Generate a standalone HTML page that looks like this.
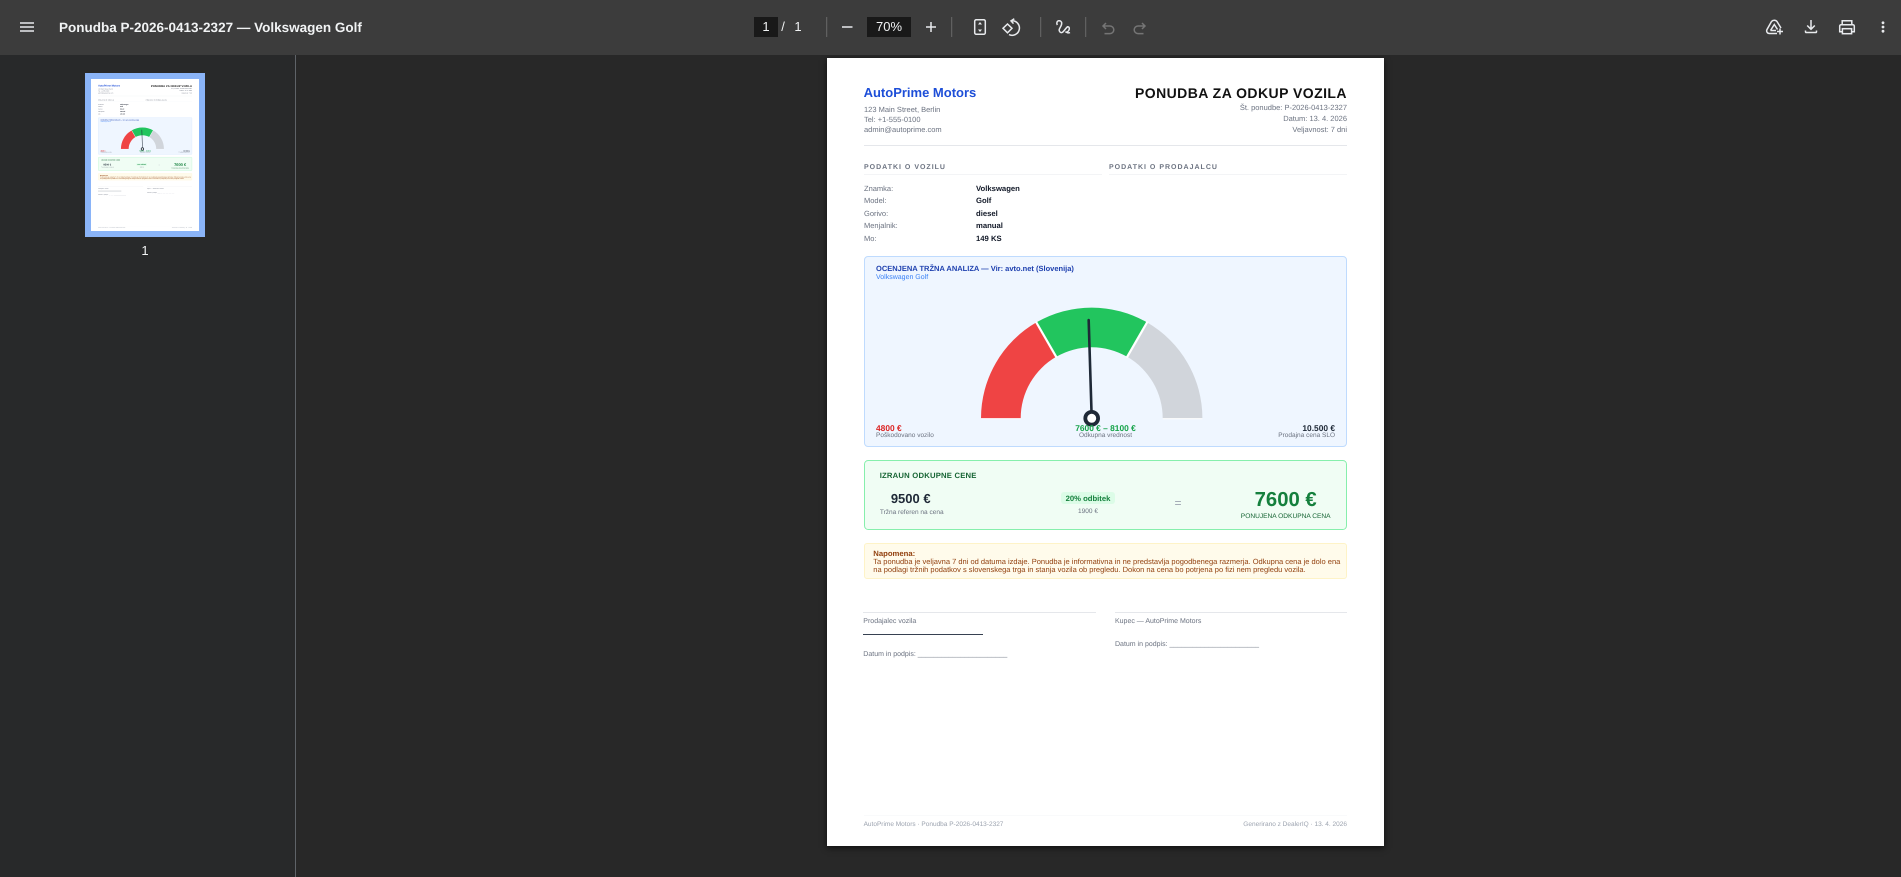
<!DOCTYPE html>
<html lang="sl">
<head>
<meta charset="utf-8">
<title>Ponudba P-2026-0413-2327 — Volkswagen Golf</title>
<style>
html,body{margin:0;padding:0;width:1901px;height:877px;overflow:hidden;background:#282828;font-family:"Liberation Sans",sans-serif}
#bar{position:absolute;left:0;top:0;width:1901px;height:55px;background:#3c3c3c;z-index:5}
#bar svg{position:absolute;left:0;top:0}
#side{position:absolute;left:0;top:55px;width:295px;height:822px;background:#28292a;border-right:1px solid #5f6368;box-sizing:content-box}
#name{position:absolute;left:59px;top:18px;line-height:20px;font-size:13.5px;font-weight:700;color:#f1f3f4;white-space:nowrap;text-rendering:geometricPrecision}
.bx{position:absolute;top:17px;height:20px;background:#191919}
.tb{position:absolute;top:17px;line-height:20px;font-size:13px;color:#f1f3f4;text-align:center;white-space:nowrap}
#thumbb{position:absolute;left:85px;top:73px;width:120px;height:164px;background:#8ab4f8}
#thumbw{position:absolute;left:91px;top:79px;width:108.2px;height:152px;background:#fff;overflow:hidden;filter:blur(.35px)}
#thumbw .page{position:absolute;left:0;top:0;transform:scale(.1943);transform-origin:0 0;box-shadow:none;filter:none}
#tn{position:absolute;left:135px;top:241px;width:20px;text-align:center;color:#f1f3f4;font-size:13px;line-height:20px}
.page{position:absolute;left:827px;top:58px;width:557px;height:787.5px;background:#fff;box-shadow:0 2px 6px rgba(0,0,0,.6);overflow:hidden;text-rendering:geometricPrecision;filter:blur(.25px)}
.page div{position:absolute}
.t{line-height:10px;height:10px;margin-top:.6px;white-space:nowrap;font-size:7.5px;color:#6b7280}
.c{width:200px;text-align:center}
.b{font-weight:700}
.v{left:149px;font-weight:700;color:#111827;font-size:7.7px}
.h{font-weight:700;font-size:7px;letter-spacing:1px}
.l{left:37px}
.s{font-size:6.5px}
.m{font-size:7.7px}
</style>
</head>
<body>
<div id="side"></div>
<div id="thumbb"></div>
<div id="thumbw">
<div class="page">
<div class="t b" style="left:36.6px;top:29.7px;font-size:13px;color:#1d4ed8">AutoPrime Motors</div>
<div class="t l" style="top:46.3px">123 Main Street, Berlin</div>
<div class="t l" style="top:56.3px">Tel: +1-555-0100</div>
<div class="t l" style="top:66.3px">admin@autoprime.com</div>
<div class="t b" style="right:37px;top:29px;font-size:14px;letter-spacing:.45px;color:#111">PONUDBA ZA ODKUP VOZILA</div>
<div class="t" style="right:37px;top:44.3px">Št. ponudbe: P-2026-0413-2327</div>
<div class="t" style="right:37px;top:55.3px">Datum: 13. 4. 2026</div>
<div class="t" style="right:37px;top:66.3px">Veljavnost: 7 dni</div>
<div style="left:37px;top:87.3px;width:483px;height:1px;background:#e5e7eb"></div>
<div class="t h l" style="top:104px">PODATKI O VOZILU</div>
<div class="t h" style="left:282px;top:104px">PODATKI O PRODAJALCU</div>
<div style="left:37px;top:116.3px;width:238px;height:1px;background:#f3f4f6"></div>
<div style="left:282px;top:116.3px;width:238px;height:1px;background:#f3f4f6"></div>
<div class="t l" style="top:125.3px">Znamka:</div><div class="t v" style="top:125.3px">Volkswagen</div>
<div class="t l" style="top:137.7px">Model:</div><div class="t v" style="top:137.7px">Golf</div>
<div class="t l" style="top:150.3px">Gorivo:</div><div class="t v" style="top:150.3px">diesel</div>
<div class="t l" style="top:162.7px">Menjalnik:</div><div class="t v" style="top:162.7px">manual</div>
<div class="t l" style="top:175.3px">Mo:</div><div class="t v" style="top:175.3px">149 KS</div>
<div style="left:37px;top:198px;width:483px;height:191px;box-sizing:border-box;border:1px solid #bfdbfe;background:#eff6ff;border-radius:4px"></div>
<div class="t b" style="left:49px;top:205.3px;color:#1e40af">OCENJENA TRŽNA ANALIZA — Vir: avto.net (Slovenija)</div>
<div class="t" style="left:49px;top:214.7px;font-size:7px;color:#3b82f6">Volkswagen Golf</div>
<svg style="position:absolute;left:0;top:0" width="557" height="787" viewBox="0 0 557 787">
<path d="M154 360.3A110.7 110.7 0 0 1 209.35 264.43L229.2 298.81A71 71 0 0 0 193.7 360.3Z" fill="#ef4444"/>
<path d="M209.35 264.43A110.7 110.7 0 0 1 320.05 264.43L300.2 298.81A71 71 0 0 0 229.2 298.81Z" fill="#22c55e"/>
<path d="M320.05 264.43A110.7 110.7 0 0 1 375.4 360.3H335.7A71 71 0 0 0 300.2 298.81Z" fill="#d1d5db"/>
<path d="M208.8 263.5L229.7 299.7M320.6 263.5L299.7 299.7" stroke="#fff" stroke-width="2.2"/>
<path d="M154 360.8H193.7M335.7 360.8H375.4" stroke="#fff" stroke-width="1"/>
<line x1="264.7" y1="360.3" x2="261.67" y2="262" stroke="#1f2937" stroke-width="2.6" stroke-linecap="round"/>
<circle cx="264.7" cy="360.3" r="6.4" fill="#fff" stroke="#1f2937" stroke-width="3.8"/>
</svg>
<div class="t b" style="left:49px;top:364.3px;font-size:8.4px;color:#dc2626">4800 €</div>
<div class="t s" style="left:49px;top:372.6px">Poškodovano vozilo</div>
<div class="t b c" style="left:178.5px;top:364.3px;font-size:8.4px;color:#16a34a">7600 € – 8100 €</div>
<div class="t s c" style="left:178.5px;top:372.6px">Odkupna vrednost</div>
<div class="t b" style="right:49px;top:364.3px;font-size:8.4px;color:#1f2937">10.500 €</div>
<div class="t s" style="right:49px;top:372.6px">Prodajna cena SLO</div>
<div style="left:37px;top:402.3px;width:483px;height:70px;box-sizing:border-box;border:1.4px solid #86efac;background:#f0fdf4;border-radius:4.2px"></div>
<div class="t b m" style="left:52.7px;top:412px;letter-spacing:.2px;color:#166534">IZRAUN ODKUPNE CENE</div>
<div class="t b c" style="left:-16.3px;top:435px;font-size:13px;color:#1f2937">9500 €</div>
<div class="t s c" style="left:-15.3px;top:449.5px">Tržna referen na cena</div>
<div style="left:233.7px;top:434px;width:54.6px;height:12px;background:#dcfce7;border-radius:3px"></div>
<div class="t b c m" style="left:161px;top:435px;color:#15803d">20% odbitek</div>
<div class="t s c" style="left:161px;top:448.5px">1900 €</div>
<div class="t c" style="left:251px;top:439.7px;font-size:12px;color:#9ca3af">=</div>
<div class="t b c" style="left:358.7px;top:436px;font-size:20.3px;color:#15803d">7600 €</div>
<div class="t c" style="left:358.7px;top:453.5px;font-size:6.6px;color:#166534">PONUJENA ODKUPNA CENA</div>
<div style="left:37px;top:485.3px;width:483px;height:36px;box-sizing:border-box;border:1px solid #fef3c7;background:#fffbeb;border-radius:3px"></div>
<div class="t b m" style="left:46.3px;top:490.3px;color:#92400e">Napomena:</div>
<div class="t" style="left:46.3px;top:498px;color:#92400e">Ta ponudba je veljavna 7 dni od datuma izdaje. Ponudba je informativna in ne predstavlja pogodbenega razmerja. Odkupna cena je dolo ena</div>
<div class="t" style="left:46.3px;top:506.7px;color:#92400e">na podlagi tržnih podatkov s slovenskega trga in stanja vozila ob pregledu. Dokon na cena bo potrjena po fizi nem pregledu vozila.</div>
<div style="left:36.3px;top:554px;width:232.7px;height:1px;background:#e5e7eb"></div>
<div style="left:288px;top:554px;width:232px;height:1px;background:#e5e7eb"></div>
<div class="t" style="left:36.3px;top:558.7px;font-size:7px">Prodajalec vozila</div>
<div class="t" style="left:288px;top:558.7px;font-size:7px">Kupec — AutoPrime Motors</div>
<div style="left:36.3px;top:576px;width:120px;height:1.3px;background:#374151"></div>
<div class="t" style="left:36.3px;top:591.7px;font-size:7px">Datum in podpis: _______________________</div>
<div class="t" style="left:288px;top:581.7px;font-size:7px">Datum in podpis: _______________________</div>
<div style="left:37px;top:757.3px;width:483px;height:1px;background:#f9fafb"></div>
<div class="t" style="left:36.6px;top:761.7px;font-size:6.5px;color:#9ca3af">AutoPrime Motors · Ponudba P-2026-0413-2327</div>
<div class="t" style="right:37px;top:761.7px;font-size:6.5px;color:#9ca3af">Generirano z DealerIQ · 13. 4. 2026</div>
</div>
</div>
<div id="tn">1</div>

<div class="page">
<div class="t b" style="left:36.6px;top:29.7px;font-size:13px;color:#1d4ed8">AutoPrime Motors</div>
<div class="t l" style="top:46.3px">123 Main Street, Berlin</div>
<div class="t l" style="top:56.3px">Tel: +1-555-0100</div>
<div class="t l" style="top:66.3px">admin@autoprime.com</div>
<div class="t b" style="right:37px;top:29px;font-size:14px;letter-spacing:.45px;color:#111">PONUDBA ZA ODKUP VOZILA</div>
<div class="t" style="right:37px;top:44.3px">Št. ponudbe: P-2026-0413-2327</div>
<div class="t" style="right:37px;top:55.3px">Datum: 13. 4. 2026</div>
<div class="t" style="right:37px;top:66.3px">Veljavnost: 7 dni</div>
<div style="left:37px;top:87.3px;width:483px;height:1px;background:#e5e7eb"></div>
<div class="t h l" style="top:104px">PODATKI O VOZILU</div>
<div class="t h" style="left:282px;top:104px">PODATKI O PRODAJALCU</div>
<div style="left:37px;top:116.3px;width:238px;height:1px;background:#f3f4f6"></div>
<div style="left:282px;top:116.3px;width:238px;height:1px;background:#f3f4f6"></div>
<div class="t l" style="top:125.3px">Znamka:</div><div class="t v" style="top:125.3px">Volkswagen</div>
<div class="t l" style="top:137.7px">Model:</div><div class="t v" style="top:137.7px">Golf</div>
<div class="t l" style="top:150.3px">Gorivo:</div><div class="t v" style="top:150.3px">diesel</div>
<div class="t l" style="top:162.7px">Menjalnik:</div><div class="t v" style="top:162.7px">manual</div>
<div class="t l" style="top:175.3px">Mo:</div><div class="t v" style="top:175.3px">149 KS</div>
<div style="left:37px;top:198px;width:483px;height:191px;box-sizing:border-box;border:1px solid #bfdbfe;background:#eff6ff;border-radius:4px"></div>
<div class="t b" style="left:49px;top:205.3px;color:#1e40af">OCENJENA TRŽNA ANALIZA — Vir: avto.net (Slovenija)</div>
<div class="t" style="left:49px;top:214.7px;font-size:7px;color:#3b82f6">Volkswagen Golf</div>
<svg style="position:absolute;left:0;top:0" width="557" height="787" viewBox="0 0 557 787">
<path d="M154 360.3A110.7 110.7 0 0 1 209.35 264.43L229.2 298.81A71 71 0 0 0 193.7 360.3Z" fill="#ef4444"/>
<path d="M209.35 264.43A110.7 110.7 0 0 1 320.05 264.43L300.2 298.81A71 71 0 0 0 229.2 298.81Z" fill="#22c55e"/>
<path d="M320.05 264.43A110.7 110.7 0 0 1 375.4 360.3H335.7A71 71 0 0 0 300.2 298.81Z" fill="#d1d5db"/>
<path d="M208.8 263.5L229.7 299.7M320.6 263.5L299.7 299.7" stroke="#fff" stroke-width="2.2"/>
<path d="M154 360.8H193.7M335.7 360.8H375.4" stroke="#fff" stroke-width="1"/>
<line x1="264.7" y1="360.3" x2="261.67" y2="262" stroke="#1f2937" stroke-width="2.6" stroke-linecap="round"/>
<circle cx="264.7" cy="360.3" r="6.4" fill="#fff" stroke="#1f2937" stroke-width="3.8"/>
</svg>
<div class="t b" style="left:49px;top:364.3px;font-size:8.4px;color:#dc2626">4800 €</div>
<div class="t s" style="left:49px;top:372.6px">Poškodovano vozilo</div>
<div class="t b c" style="left:178.5px;top:364.3px;font-size:8.4px;color:#16a34a">7600 € – 8100 €</div>
<div class="t s c" style="left:178.5px;top:372.6px">Odkupna vrednost</div>
<div class="t b" style="right:49px;top:364.3px;font-size:8.4px;color:#1f2937">10.500 €</div>
<div class="t s" style="right:49px;top:372.6px">Prodajna cena SLO</div>
<div style="left:37px;top:402.3px;width:483px;height:70px;box-sizing:border-box;border:1.4px solid #86efac;background:#f0fdf4;border-radius:4.2px"></div>
<div class="t b m" style="left:52.7px;top:412px;letter-spacing:.2px;color:#166534">IZRAUN ODKUPNE CENE</div>
<div class="t b c" style="left:-16.3px;top:435px;font-size:13px;color:#1f2937">9500 €</div>
<div class="t s c" style="left:-15.3px;top:449.5px">Tržna referen na cena</div>
<div style="left:233.7px;top:434px;width:54.6px;height:12px;background:#dcfce7;border-radius:3px"></div>
<div class="t b c m" style="left:161px;top:435px;color:#15803d">20% odbitek</div>
<div class="t s c" style="left:161px;top:448.5px">1900 €</div>
<div class="t c" style="left:251px;top:439.7px;font-size:12px;color:#9ca3af">=</div>
<div class="t b c" style="left:358.7px;top:436px;font-size:20.3px;color:#15803d">7600 €</div>
<div class="t c" style="left:358.7px;top:453.5px;font-size:6.6px;color:#166534">PONUJENA ODKUPNA CENA</div>
<div style="left:37px;top:485.3px;width:483px;height:36px;box-sizing:border-box;border:1px solid #fef3c7;background:#fffbeb;border-radius:3px"></div>
<div class="t b m" style="left:46.3px;top:490.3px;color:#92400e">Napomena:</div>
<div class="t" style="left:46.3px;top:498px;color:#92400e">Ta ponudba je veljavna 7 dni od datuma izdaje. Ponudba je informativna in ne predstavlja pogodbenega razmerja. Odkupna cena je dolo ena</div>
<div class="t" style="left:46.3px;top:506.7px;color:#92400e">na podlagi tržnih podatkov s slovenskega trga in stanja vozila ob pregledu. Dokon na cena bo potrjena po fizi nem pregledu vozila.</div>
<div style="left:36.3px;top:554px;width:232.7px;height:1px;background:#e5e7eb"></div>
<div style="left:288px;top:554px;width:232px;height:1px;background:#e5e7eb"></div>
<div class="t" style="left:36.3px;top:558.7px;font-size:7px">Prodajalec vozila</div>
<div class="t" style="left:288px;top:558.7px;font-size:7px">Kupec — AutoPrime Motors</div>
<div style="left:36.3px;top:576px;width:120px;height:1.3px;background:#374151"></div>
<div class="t" style="left:36.3px;top:591.7px;font-size:7px">Datum in podpis: _______________________</div>
<div class="t" style="left:288px;top:581.7px;font-size:7px">Datum in podpis: _______________________</div>
<div style="left:37px;top:757.3px;width:483px;height:1px;background:#f9fafb"></div>
<div class="t" style="left:36.6px;top:761.7px;font-size:6.5px;color:#9ca3af">AutoPrime Motors · Ponudba P-2026-0413-2327</div>
<div class="t" style="right:37px;top:761.7px;font-size:6.5px;color:#9ca3af">Generirano z DealerIQ · 13. 4. 2026</div>
</div>

<div id="bar">
<div id="name">Ponudba P-2026-0413-2327 — Volkswagen Golf</div>
<div class="bx" style="left:754px;width:24px"></div>
<div class="tb" style="left:754px;width:24px">1</div>
<div class="tb" style="left:778px;width:10px">/</div>
<div class="tb" style="left:792px;width:12px">1</div>
<div class="bx" style="left:867px;width:44px"></div>
<div class="tb" style="left:867px;width:44px">70%</div>
<svg width="1901" height="55" viewBox="0 0 1901 55" fill="none" stroke="#e8eaed" stroke-width="1.5">
<path d="M20 23H34M20 27H34M20 31H34"/>
<path d="M826.7 17V37M951.7 17V37M1040.7 17V37M1085.7 17V37" stroke="#6a6a6a" stroke-width="1"/>
<path d="M842 27H852.5M926 27H936M931 22V32"/>
<rect x="974.7" y="19.7" width="10.6" height="14.6" rx="1.5"/>
<path d="M980 22L982 24.5H978ZM980 32L982 29.5H978Z" fill="#e8eaed" stroke="none"/>
<path d="M1007.5 24L1012 28.3L1007.5 32.8L1003 28.3Z"/>
<path d="M1012 20.7A7.3 7.3 0 1 1 1009 34.6"/>
<path d="M1014.3 18.7L1011 20.9L1013.5 23.6"/>
<path d="M1057.3 25C1055 20 1061.7 19.3 1061.7 23.3C1061.7 27.3 1057.3 29.3 1060 32C1062.7 34.7 1065 28.3 1067.7 26.7C1070.7 26.7 1069.3 32.7 1065.3 32M1066.5 32.2C1067.7 33 1069 33 1070 32.5"/>
<path d="M1106 23L1103 26L1106 29M1103.5 26H1110A3.8 3.8 0 0 1 1110 33.6H1104.5" stroke="#757575"/>
<path d="M1142 23L1145 26L1142 29M1144.5 26H1138A3.8 3.8 0 0 0 1138 33.6H1143.5" stroke="#757575"/>
<path d="M1771.5 21.5L1767 29.5C1766 31.5 1767.3 33.5 1769.5 33.5H1777M1771.5 21.5C1773 19.8 1775.6 19.8 1777 21.5L1781 28M1770.5 30.5L1774.3 24.5L1777.5 29.5M1770.5 30.5H1776"/>
<path d="M1780 28.5V34.5M1777 31.5H1783"/>
<path d="M1811 20V29M1807.2 25.5L1811 29.3L1814.8 25.5"/>
<path d="M1805.5 30.5V31.7A.8 .8 0 0 0 1806.3 32.5H1815.7A.8 .8 0 0 0 1816.5 31.7V30.5"/>
<path d="M1842.2 24.5V20.7H1851.8V24.5"/>
<path d="M1842 31.7H1839.7V26A1.5 1.5 0 0 1 1841.2 24.7H1852.8A1.5 1.5 0 0 1 1854.3 26V31.7H1852"/>
<rect x="1842.4" y="28.7" width="9.2" height="5"/>
<circle cx="1883" cy="22.8" r="1.4" fill="#e8eaed" stroke="none"/>
<circle cx="1883" cy="27" r="1.4" fill="#e8eaed" stroke="none"/>
<circle cx="1883" cy="31.2" r="1.4" fill="#e8eaed" stroke="none"/>
</svg>
</div>
</body>
</html>
